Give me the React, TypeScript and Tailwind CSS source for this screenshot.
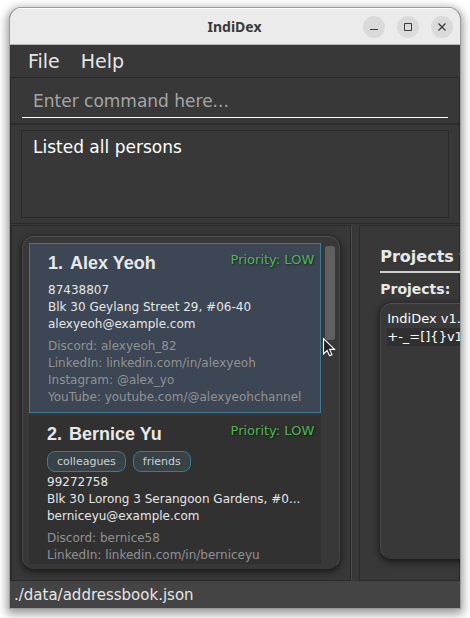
import type { ReactNode } from 'react';

type Person = {
  id: number;
  name: string;
  tags: string[];
  details: string[];
  socials: string[];
  selected?: boolean;
};

const people: Person[] = [
  {
    id: 1,
    name: 'Alex Yeoh',
    tags: [],
    details: ['87438807', 'Blk 30 Geylang Street 29, #06-40', 'alexyeoh@example.com'],
    socials: [
      'Discord: alexyeoh_82',
      'LinkedIn: linkedin.com/in/alexyeoh',
      'Instagram: @alex_yo',
      'YouTube: youtube.com/@alexyeohchannel',
    ],
    selected: true,
  },
  {
    id: 2,
    name: 'Bernice Yu',
    tags: ['colleagues', 'friends'],
    details: ['99272758', 'Blk 30 Lorong 3 Serangoon Gardens, #0...', 'berniceyu@example.com'],
    socials: ['Discord: bernice58', 'LinkedIn: linkedin.com/in/berniceyu'],
  },
];

const projects = ['IndiDex v1.3', '+-_=[]{}v1.3'];

function WindowButton({ label, children }: { label: string; children: ReactNode }) {
  return (
    <button aria-label={label} className="flex size-[22px] items-center justify-center rounded-full bg-[#dadada]">
      <svg width="10" height="10" viewBox="0 0 10 10" fill="none" stroke="#3a3a3a" aria-hidden="true">
        {children}
      </svg>
    </button>
  );
}

function PersonCard({ person }: { person: Person }) {
  const frame = person.selected
    ? 'border-[#3e7b91] bg-[#3c4654] pt-[7px] pb-[6px] pl-[18px]'
    : 'border-[#313131] bg-[#313131] pt-[6px] pb-[6px] pl-[17px]';
  return (
    <li className={`shrink-0 border pr-[6px] text-xs leading-[17px] ${frame}`}>
      <div className="flex items-start justify-between">
        <h2 className="flex gap-[7px] font-['Liberation_Sans',sans-serif] text-lg leading-6 font-bold text-[#e8e8e8]">
          <span>{person.id}.</span>
          <span>{person.name}</span>
        </h2>
        <span className="text-[13px] text-[#4fb453] [text-shadow:1px_1px_2px_#00000080]">Priority: LOW</span>
      </div>
      {person.tags.length > 0 && (
        <ul className="mt-[5px] -mb-[5px] flex gap-[7px]">
          {person.tags.map((tag) => (
            <li key={tag} className="h-[21px] rounded-lg border border-[#3e7b91] bg-[#384247] px-[9px] text-[11px] leading-[19px] text-[#c9d3d8]">
              {tag}
            </li>
          ))}
        </ul>
      )}
      <div className="mt-[7px] text-[#e6e6e6]">
        {person.details.map((line) => (
          <p key={line} className="truncate">{line}</p>
        ))}
      </div>
      <div className="mt-[5px] text-[#929292]">
        {person.socials.map((line) => (
          <p key={line} className="truncate">{line}</p>
        ))}
      </div>
    </li>
  );
}

export default function App() {
  return (
    <div className="flex h-screen flex-col bg-white px-[9px] pt-[7px] pb-[9px] font-['DejaVu_Sans',sans-serif]">
      <div className="relative flex min-h-0 flex-1 flex-col overflow-hidden rounded-t-xl border border-[#9c9c9c] bg-[#383838] [box-shadow:0_3px_10px_2px_#00000066]">
        <header className="flex h-[37px] shrink-0 items-center border-t border-b border-t-white border-b-[#b5b5b5] bg-[#ebebeb] pr-[7px] pl-[96px]">
          <h1 className="flex-1 text-center font-['Noto_Sans',sans-serif] text-sm font-bold text-[#3a3a3a]">IndiDex</h1>
          <div className="flex gap-3">
            <WindowButton label="Minimize"><path d="M1 7.5h8" /></WindowButton>
            <WindowButton label="Maximize"><path d="M1.5 1.5h7v7h-7z" /></WindowButton>
            <WindowButton label="Close"><path d="M1.5 1.5l7 7M8.5 1.5l-7 7" strokeWidth="1.3" /></WindowButton>
          </div>
        </header>

        <nav className="flex h-8 shrink-0 items-center gap-[21px] pt-px pl-[18px] text-[19px] text-[#e6e6e6]">
          <button>File</button>
          <button>Help</button>
        </nav>

        <main className="flex min-h-0 flex-1 flex-col border border-b-0 border-[#2a2a2a]">
          <div className="h-[47px] shrink-0 border-b-2 border-[#2a2a2a] px-[11px] pt-[7px]">
            <input
              aria-label="Command"
              placeholder="Enter command here..."
              className="h-[33px] w-full border-b border-white bg-transparent px-[11px] text-[17px] text-white outline-none placeholder:text-[#a6a6a6]"
            />
          </div>

          <div className="h-[99px] shrink-0 border-b border-[#2a2a2a] px-[10px] pt-[5px]">
            <output className="block h-[88px] border border-[#2a2a2a] px-[11px] pt-[4px] text-[17px] leading-6 text-white">
              Listed all persons
            </output>
          </div>

          <div className="-mr-px flex min-h-0 flex-1 pt-px">
            <section aria-label="Persons" className="flex w-[76%] shrink-0 border border-r-[#4c4c4c] border-t-[#2a2a2a] border-b-[#2a2a2a] border-l-[#2a2a2a]">
              <div className="flex min-w-0 flex-1 border-r border-[#2a2a2a] px-[10px] pt-[10px] pb-[11px]">
                <div className="flex min-w-0 flex-1 rounded-xl border border-[#383838] border-t-[#505050] border-r-[#474747] border-l-[#474747] bg-[#383838] p-[6px] pr-[4px] pb-1 [box-shadow:0_2px_6px_1px_#0000008c]">
                  <ul className="flex min-w-0 flex-1 flex-col gap-[2px] overflow-hidden">
                    {people.map((person) => (
                      <PersonCard key={person.id} person={person} />
                    ))}
                  </ul>
                  <div className="ml-1 w-[10px] pt-[3px]">
                    <div className="h-[94px] rounded-[3px] bg-[#606060]" />
                  </div>
                </div>
              </div>
            </section>

            <section aria-label="Projects" className="ml-[7px] min-w-0 flex-1 overflow-hidden border border-r-0 border-[#2a2a2a]">
              <div className="flex h-full w-[240px] flex-col px-5 pt-[19px] pb-[21px]">
                <h2 className="shrink-0 border-b-2 border-[#cfcfcf] pb-[2px] text-base leading-6 font-bold text-[#e8e8e8]">
                  Projects for Alex Yeoh
                </h2>
                <h3 className="mt-1 shrink-0 text-sm leading-6 font-bold text-[#e8e8e8]">Projects:</h3>
                <ul className="mt-[2px] min-h-0 flex-1 rounded-xl border border-[#383838] border-t-[#505050] border-l-[#474747] bg-[#383838] p-[6px] text-[13px] leading-[18px] text-white [box-shadow:0_2px_6px_1px_#0000008c]">
                  {projects.map((project) => (
                    <li key={project} className="odd:bg-[#3a3a3a] even:bg-[#303030]">{project}</li>
                  ))}
                </ul>
              </div>
            </section>
          </div>
        </main>

        <footer className="h-[27px] shrink-0 bg-[#444444] pl-1 text-[15px] leading-[28px] text-[#e6e6e6]">
          ./data/addressbook.json
        </footer>
      </div>

      <svg className="absolute top-[337px] left-[322px]" width="14" height="20" viewBox="0 0 14 20" aria-hidden="true">
        <path d="M1.5 1.5v15.5l3.6-3.5 2.4 5.2 2.5-1.1-2.4-5.2h5z" fill="#222" stroke="#fff" strokeWidth="1.1" />
      </svg>
    </div>
  );
}
